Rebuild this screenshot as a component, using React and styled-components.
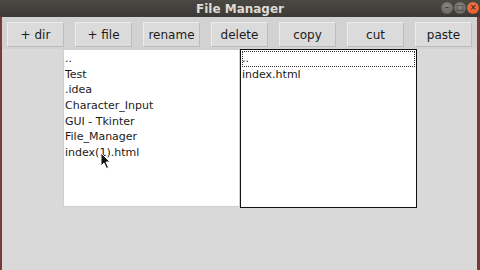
import React from "react";
import styled, { createGlobalStyle } from "styled-components";

const Global = createGlobalStyle`
  html, body { margin: 0; padding: 0; background: #d9d9d9; }
  body { width: 480px; height: 270px; overflow: hidden; }
`;

const Window = styled.div`
  position: relative;
  width: 480px;
  height: 270px;
  box-sizing: border-box;
  display: flex;
  flex-direction: column;
  background: #d9d9d9;
  border-left: 2px solid #7b3a35;
  border-right: 3px solid #7b3a35;
  font-family: "DejaVu Sans", sans-serif;
`;

const TitleBar = styled.div`
  height: 17px;
  margin: 0 -3px 0 -2px;
  background: linear-gradient(#4a4843, #3b3a36);
  position: relative;
  display: flex;
  align-items: center;
  justify-content: center;
  color: #dfdbd2;
  font-weight: bold;
  font-size: 12px;
`;

const Controls = styled.div`
  position: absolute;
  right: 1px;
  top: 2px;
  display: flex;
  gap: 1px;
`;

const Dot = styled.div`
  width: 12px;
  height: 12px;
  border-radius: 50%;
  background: ${(p) => (p.close ? "radial-gradient(circle at 50% 35%, #f37b52, #d9531f)" : "radial-gradient(circle at 50% 35%, #8a8883, #5d5b56)")};
  display: flex;
  align-items: center;
  justify-content: center;
  color: ${(p) => (p.close ? "#5a2410" : "#3a3935")};
  font-size: 8px;
  font-weight: bold;
  line-height: 1;
`;

const Toolbar = styled.div`
  display: flex;
  gap: 11px;
  padding: 5px 0 2px 5px;
  background: #d2d2d2;
`;

const Button = styled.div`
  width: 55px;
  height: 23px;
  box-sizing: content-box;
  background: #dbdbdb;
  border: 1px solid #ececec;
  border-right-color: #bcbcbc;
  border-bottom-color: #bcbcbc;
  display: flex;
  align-items: center;
  justify-content: center;
  font-size: 12px;
  color: #1c1c1c;
`;

const Lists = styled.div`
  display: flex;
  padding-left: 61px;
`;

const ListBox = styled.div`
  box-sizing: border-box;
  width: ${(p) => p.w}px;
  height: ${(p) => p.h}px;
  background: #fff;
  border: 1px solid ${(p) => (p.focus ? "#111" : "#cfcfcf")};
  padding: 1px 1px;
  font-size: 11px;
  color: #1a1a1a;
`;

const Item = styled.div`
  height: 15.7px;
  line-height: 15.7px;
  box-sizing: border-box;
  white-space: nowrap;
  outline: ${(p) => (p.active ? "1px dotted #333" : "none")};
  outline-offset: -1px;
`;

const Cursor = styled.svg`
  position: absolute;
  left: 98px;
  top: 152px;
`;

const buttons = ["+ dir", "+ file", "rename", "delete", "copy", "cut", "paste"];
const left = ["..", "Test", ".idea", "Character_Input", "GUI - Tkinter", "File_Manager", "index(1).html"];
const right = ["..", "index.html"];

export default function App() {
  return (
    <>
      <Global />
      <Window>
        <TitleBar>
          File Manager
          <Controls>
            <Dot>–</Dot>
            <Dot>□</Dot>
            <Dot close>×</Dot>
          </Controls>
        </TitleBar>
        <Toolbar>
          {buttons.map((b) => (
            <Button key={b}>{b}</Button>
          ))}
        </Toolbar>
        <Lists>
          <ListBox w={177} h={158}>
            {left.map((t) => (
              <Item key={t}>{t}</Item>
            ))}
          </ListBox>
          <ListBox w={177} h={159} focus>
            {right.map((t, i) => (
              <Item key={t} active={i === 0}>{t}</Item>
            ))}
          </ListBox>
        </Lists>
        <Cursor width="12" height="18" viewBox="0 0 12 18">
          <path d="M1 1 L1 14 L4 11 L6.5 16.5 L8.5 15.5 L6 10 L10 10 Z" fill="#111" stroke="#fff" strokeWidth="1" />
        </Cursor>
      </Window>
    </>
  );
}
